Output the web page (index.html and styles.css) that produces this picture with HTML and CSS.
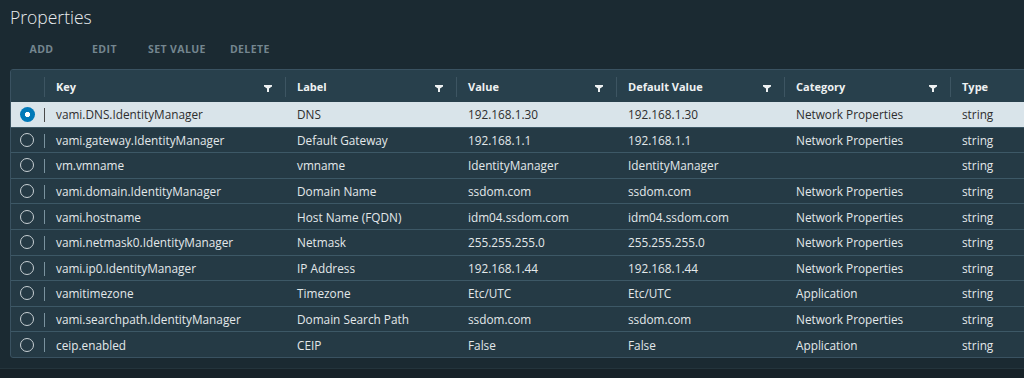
FILE: index.html
```html
<!DOCTYPE html>
<html>
<head>
<title>Properties</title>
<link rel="stylesheet" href="styles.css">
</head>
<body>
<div class="page">
<h2 class="title">Properties</h2>

<div class="actions">
<button class="btn">ADD</button>
<button class="btn">EDIT</button>
<button class="btn">SET VALUE</button>
<button class="btn">DELETE</button>
</div>

<div class="grid">
<table>
<colgroup>
<col class="c-sel"><col class="c-key"><col class="c-label"><col class="c-value"><col class="c-default"><col class="c-cat"><col class="c-type">
</colgroup>
<thead>
<tr>
<th class="sel"><span class="sep"></span></th>
<th><span class="hd">Key</span><svg class="filter" viewBox="0 0 8 7"><polygon points="0,0 8,0 8,1.6 5,3.4 5,7 3,7 3,3.4 0,1.6"/></svg><span class="sep"></span></th>
<th><span class="hd">Label</span><svg class="filter" viewBox="0 0 8 7"><polygon points="0,0 8,0 8,1.6 5,3.4 5,7 3,7 3,3.4 0,1.6"/></svg><span class="sep"></span></th>
<th><span class="hd">Value</span><svg class="filter" viewBox="0 0 8 7"><polygon points="0,0 8,0 8,1.6 5,3.4 5,7 3,7 3,3.4 0,1.6"/></svg><span class="sep"></span></th>
<th><span class="hd">Default Value</span><svg class="filter" viewBox="0 0 8 7"><polygon points="0,0 8,0 8,1.6 5,3.4 5,7 3,7 3,3.4 0,1.6"/></svg><span class="sep"></span></th>
<th><span class="hd">Category</span><svg class="filter" viewBox="0 0 8 7"><polygon points="0,0 8,0 8,1.6 5,3.4 5,7 3,7 3,3.4 0,1.6"/></svg><span class="sep"></span></th>
<th><span class="hd">Type</span></th>
</tr>
</thead>
<tbody>
<tr class="selected">
<td class="sel"><span class="radio on"></span><span class="sep"></span></td>
<td>vami.DNS.IdentityManager</td><td>DNS</td><td>192.168.1.30</td><td>192.168.1.30</td><td>Network Properties</td><td>string</td>
</tr>
<tr>
<td class="sel"><span class="radio"></span><span class="sep"></span></td>
<td>vami.gateway.IdentityManager</td><td>Default Gateway</td><td>192.168.1.1</td><td>192.168.1.1</td><td>Network Properties</td><td>string</td>
</tr>
<tr>
<td class="sel"><span class="radio"></span><span class="sep"></span></td>
<td>vm.vmname</td><td>vmname</td><td>IdentityManager</td><td>IdentityManager</td><td></td><td>string</td>
</tr>
<tr>
<td class="sel"><span class="radio"></span><span class="sep"></span></td>
<td>vami.domain.IdentityManager</td><td>Domain Name</td><td>ssdom.com</td><td>ssdom.com</td><td>Network Properties</td><td>string</td>
</tr>
<tr>
<td class="sel"><span class="radio"></span><span class="sep"></span></td>
<td>vami.hostname</td><td>Host Name (FQDN)</td><td>idm04.ssdom.com</td><td>idm04.ssdom.com</td><td>Network Properties</td><td>string</td>
</tr>
<tr>
<td class="sel"><span class="radio"></span><span class="sep"></span></td>
<td>vami.netmask0.IdentityManager</td><td>Netmask</td><td>255.255.255.0</td><td>255.255.255.0</td><td>Network Properties</td><td>string</td>
</tr>
<tr>
<td class="sel"><span class="radio"></span><span class="sep"></span></td>
<td>vami.ip0.IdentityManager</td><td>IP Address</td><td>192.168.1.44</td><td>192.168.1.44</td><td>Network Properties</td><td>string</td>
</tr>
<tr>
<td class="sel"><span class="radio"></span><span class="sep"></span></td>
<td>vamitimezone</td><td>Timezone</td><td>Etc/UTC</td><td>Etc/UTC</td><td>Application</td><td>string</td>
</tr>
<tr>
<td class="sel"><span class="radio"></span><span class="sep"></span></td>
<td>vami.searchpath.IdentityManager</td><td>Domain Search Path</td><td>ssdom.com</td><td>ssdom.com</td><td>Network Properties</td><td>string</td>
</tr>
<tr>
<td class="sel"><span class="radio"></span><span class="sep"></span></td>
<td>ceip.enabled</td><td>CEIP</td><td>False</td><td>False</td><td>Application</td><td>string</td>
</tr>
</tbody>
</table>
</div>
</div>
<div class="footer"></div>
</body>
</html>
```

FILE: styles.css
```css
/* Properties grid, dark theme */

html, body
{ margin: 0;
padding: 0;
background-color: #1b2a32;
overflow: hidden;
height: 378px;
}

body
{ font-family: "Open Sans", "Noto Sans", sans-serif;
color: #e6eaec;
}

div.page
{ padding: 0 0 0 10px;
}

h2.title
{ margin: 0;
padding-top: 5px;
height: 26px;
font-size: 17.5px;
font-weight: 300;
color: #e9ecee;
line-height: 24px;
}

div.actions
{ display: flex;
height: 34px;
margin-top: 1px;
align-items: center;
}

button.btn
{ min-width: 63px;
padding: 0 12px;
background: none;
border: none;
font-family: inherit;
font-size: 10.5px;
font-weight: 700;
letter-spacing: 0.4px;
color: #74868f;
text-align: center;
}

div.grid
{ margin-top: 3px;
width: 1100px;
border: 1px solid #3a5261;
border-radius: 3px;
background-color: #253a45;
overflow: hidden;
}

table
{ border-collapse: collapse;
table-layout: fixed;
width: 1100px;
}

col.c-sel { width: 34px; }
col.c-key { width: 241px; }
col.c-label { width: 171px; }
col.c-value { width: 160px; }
col.c-default { width: 168px; }
col.c-cat { width: 166px; }
col.c-type { width: 160px; }

th
{ height: 32px;
padding: 0 11px;
text-align: left;
font-size: 11px;
font-weight: 700;
color: #eef1f2;
background-color: #28404c;
position: relative;
}

th span.sep
{ position: absolute;
right: 0;
top: 7px;
bottom: 5px;
width: 1px;
background-color: #3d5562;
}

svg.filter
{ position: absolute;
right: 14px;
top: 15px;
width: 8px;
height: 7px;
fill: #eef1f2;
}

td
{ height: 24.6px;
padding: 0 11px;
font-size: 11.8px;
white-space: nowrap;
overflow: hidden;
border-top: 1px solid #3d5866;
color: #e3e8ea;
}

td.sel, th.sel
{ padding: 0;
position: relative;
}

td.sel span.sep
{ position: absolute;
right: 0;
top: 6px;
height: 14px;
width: 1px;
background-color: #7a929e;
}

span.radio
{ display: block;
margin-left: 9px;
width: 12px;
height: 12px;
border: 1.5px solid #c8d0d4;
border-radius: 50%;
}

span.radio.on
{ width: 15px;
height: 15px;
border: none;
background: radial-gradient(circle, #ffffff 0 2.3px, #0079b8 2.9px);
}

tr.selected td
{ background-color: #d9e4ea;
color: #2e2e2e;
border-top: none;
}

tr.selected td.sel span.sep
{ background-color: #4a4a4a;
}

div.footer
{ position: absolute;
left: 0;
right: 0;
top: 368px;
height: 10px;
border-top: 1px solid #24343c;
background-color: #172228;
}
```
